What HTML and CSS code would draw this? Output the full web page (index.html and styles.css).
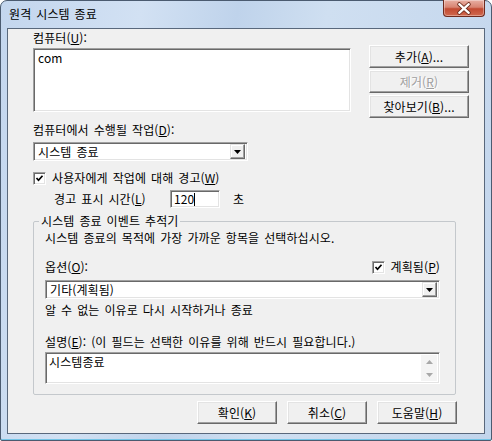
FILE: index.html
```html
<!DOCTYPE html>
<html lang="ko">
<head>
    <meta charset="UTF-8">
    <title>원격 시스템 종료</title>
    <link rel="stylesheet" href="styles.css">
</head>
<body>
<div class="window">
    <div class="titlebar">
        <span class="title">원격 시스템 종료</span>
        <div class="close-btn">
            <svg width="42" height="17" viewBox="0 0 42 17">
                <path d="M16 4 L26 13 M26 4 L16 13" stroke="#6b2a1c" stroke-width="4.2" stroke-linecap="round"/>
                <path d="M16 4 L26 13 M26 4 L16 13" stroke="#ffffff" stroke-width="2.4" stroke-linecap="round"/>
            </svg>
        </div>
    </div>
    <div class="client">
        <div class="top-row">
            <div class="computer-col">
                <div class="label">컴퓨터(<u>U</u>):</div>
                <div class="sunken computer-list">com</div>
            </div>
            <div class="side-buttons">
                <div class="btn">추가(<u>A</u>)...</div>
                <div class="btn disabled">제거(<u>R</u>)</div>
                <div class="btn">찾아보기(<u>B</u>)...</div>
            </div>
        </div>

        <div class="label action-label">컴퓨터에서 수행될 작업(<u>D</u>):</div>
        <div class="sunken combo action-combo">
            <span class="combo-text">시스템 종료</span>
            <span class="combo-btn">
                <svg width="7" height="4" viewBox="0 0 7 4"><polygon points="0,0 7,0 3.5,4" fill="#000"/></svg>
            </span>
        </div>

        <div class="check-row warn-row">
            <span class="sunken checkbox">
                <svg width="9" height="9" viewBox="0 0 9 9"><polyline points="1.5,4 3.5,6.3 7.5,1.8" fill="none" stroke="#000" stroke-width="1.7"/></svg>
            </span>
            <span>사용자에게 작업에 대해 경고(<u>W</u>)</span>
        </div>

        <div class="time-row">
            <span class="time-label">경고 표시 시간(<u>L</u>)</span>
            <div class="sunken time-box">120<span class="caret"></span></div>
            <span class="time-unit">초</span>
        </div>

        <fieldset class="tracker">
            <legend>시스템 종료 이벤트 추적기</legend>
            <div class="label intro">시스템 종료의 목적에 가장 가까운 항목을 선택하십시오.</div>
            <div class="option-row">
                <span>옵션(<u>O</u>):</span>
                <span class="check-row">
                    <span class="sunken checkbox">
                        <svg width="9" height="9" viewBox="0 0 9 9"><polyline points="1.5,4 3.5,6.3 7.5,1.8" fill="none" stroke="#000" stroke-width="1.7"/></svg>
                    </span>
                    <span>계획됨(<u>P</u>)</span>
                </span>
            </div>
            <div class="sunken combo option-combo">
                <span class="combo-text">기타(계획됨)</span>
                <span class="combo-btn">
                    <svg width="7" height="4" viewBox="0 0 7 4"><polygon points="0,0 7,0 3.5,4" fill="#000"/></svg>
                </span>
            </div>
            <div class="label reason">알 수 없는 이유로 다시 시작하거나 종료</div>
            <div class="label desc-label">설명(<u>E</u>): (이 필드는 선택한 이유를 위해 반드시 필요합니다.)</div>
            <div class="sunken desc-box">
                <span class="desc-text">시스템종료</span>
                <span class="scrollbar">
                    <svg width="7" height="4" viewBox="0 0 7 4"><polygon points="0,4 7,4 3.5,0" fill="#a8a8a8"/></svg>
                    <svg width="7" height="4" viewBox="0 0 7 4"><polygon points="0,0 7,0 3.5,4" fill="#a8a8a8"/></svg>
                </span>
            </div>
        </fieldset>

        <div class="dialog-buttons">
            <div class="btn">확인(<u>K</u>)</div>
            <div class="btn">취소(<u>C</u>)</div>
            <div class="btn">도움말(<u>H</u>)</div>
        </div>
    </div>
</div>
</body>
</html>
```

FILE: styles.css
```css
* {
    box-sizing: border-box;
}

body {
    margin: 0;
    font-family: "Noto Sans CJK KR", "Noto Sans", sans-serif;
    font-size: 12px;
    letter-spacing: 0.1px;
    word-spacing: 1.5px;
    color: #000000;
}

u {
    text-decoration-thickness: 1px;
    text-underline-offset: 1px;
}

.window {
    width: 492px;
    height: 441px;
    border: 1px solid #4b5b70;
    border-radius: 7px 7px 2px 2px;
    padding: 0 6px 6px 6px;
    background: linear-gradient(100deg, #c3d6ee 0%, #d2e1f3 25%, #bfd3eb 42%, #cfdff1 58%, #c2d5ec 100%);
    box-shadow: inset 0 -1px 0 #74c4e6;
}

.titlebar {
    height: 27px;
    display: flex;
    justify-content: space-between;
    align-items: flex-start;
    padding-left: 2px;
}

.title {
    margin-top: 6px;
    line-height: 14px;
    font-size: 12px;
}

.close-btn {
    width: 42px;
    height: 17px;
    margin-top: -1px;
    border: 1px solid #6e2a1e;
    border-top: none;
    border-radius: 0 0 4px 4px;
    background: linear-gradient(to bottom, #e8b0a4 0%, #d88472 45%, #c24a32 55%, #d0694e 100%);
    box-shadow: inset 0 0 0 1px rgba(255, 255, 255, 0.35);
    display: flex;
}

.client {
    width: 478px;
    height: 406px;
    border: 1px solid #59687c;
    background: #f0f0f0;
    padding: 2px 15px 0 25px;
}

.label {
    line-height: 14px;
    white-space: nowrap;
}

/* classic 3d borders */
.sunken {
    background: #ffffff;
    border: 1px solid;
    border-color: #a0a0a0 #ffffff #ffffff #a0a0a0;
    box-shadow: inset 1px 1px 0 #696969, inset -1px -1px 0 #e3e3e3;
}

.btn {
    height: 23px;
    border: 1px solid;
    border-color: #ffffff #696969 #696969 #ffffff;
    box-shadow: inset -1px -1px 0 #a0a0a0, inset 1px 1px 0 #e3e3e3;
    background: #f0f0f0;
    display: flex;
    align-items: center;
    justify-content: center;
    line-height: 14px;
    white-space: nowrap;
}

.btn.disabled {
    color: #a0a0a0;
    text-shadow: 1px 1px 0 #ffffff;
}

.top-row {
    display: flex;
    align-items: flex-start;
}

.computer-col {
    width: 318px;
}

.computer-list {
    margin-top: 3px;
    height: 64px;
    padding: 2px 4px;
    line-height: 14px;
}

.side-buttons {
    width: 100px;
    margin-left: 18px;
    margin-top: 14px;
    display: flex;
    flex-direction: column;
    gap: 2px;
}

.action-label {
    margin-top: 5px;
}

.combo {
    display: flex;
    align-items: center;
    justify-content: space-between;
    height: 19px;
    padding: 2px;
    line-height: 14px;
}

.combo-text {
    padding-left: 2px;
}

.combo-btn {
    width: 15px;
    height: 15px;
    background: #f0f0f0;
    border: 1px solid;
    border-color: #e3e3e3 #696969 #696969 #e3e3e3;
    box-shadow: inset -1px -1px 0 #a0a0a0, inset 1px 1px 0 #ffffff;
    display: flex;
    align-items: center;
    justify-content: center;
}

.action-combo {
    margin-top: 5px;
    width: 215px;
}

.check-row {
    display: flex;
    align-items: center;
    line-height: 14px;
}

.checkbox {
    width: 13px;
    height: 13px;
    display: flex;
    align-items: center;
    justify-content: center;
    margin-right: 6px;
}

.warn-row {
    margin-top: 10px;
}

.time-row {
    display: flex;
    align-items: center;
    margin-top: 5px;
    line-height: 14px;
}

.time-label {
    width: 137px;
    padding-left: 21px;
    white-space: nowrap;
}

.time-box {
    width: 50px;
    height: 18px;
    padding: 0 3px;
    display: flex;
    align-items: center;
}

.caret {
    display: inline-block;
    width: 1px;
    height: 13px;
    background: #000000;
}

.time-unit {
    margin-left: 13px;
}

.tracker {
    margin: 6px 0 0 0;
    width: 423px;
    min-width: 0;
    padding: 0 11px 10px 11px;
    border: 1px solid #c4c8cc;
    border-radius: 2px;
}

.tracker legend {
    padding: 0 2px;
    margin-left: -6px;
    line-height: 14px;
}

.intro {
    margin-top: 3px;
}

.option-row {
    margin-top: 15px;
    display: flex;
    justify-content: space-between;
    align-items: center;
    line-height: 14px;
    padding-right: 4px;
}

.option-combo {
    margin-top: 6px;
    width: 395px;
}

.reason {
    margin-top: 4px;
}

.desc-label {
    margin-top: 18px;
}

.desc-box {
    margin-top: 3px;
    width: 395px;
    height: 32px;
    padding: 2px;
    display: flex;
    justify-content: space-between;
    line-height: 14px;
}

.desc-text {
    padding-left: 1px;
}

.scrollbar {
    width: 16px;
    background: #f4f4f4;
    display: flex;
    flex-direction: column;
    justify-content: space-between;
    align-items: center;
    padding: 5px 0 4px 0;
}

.dialog-buttons {
    margin-top: 6px;
    display: flex;
    justify-content: flex-end;
    gap: 10px;
    padding-right: 12px;
}

.dialog-buttons .btn {
    width: 80px;
}
```
